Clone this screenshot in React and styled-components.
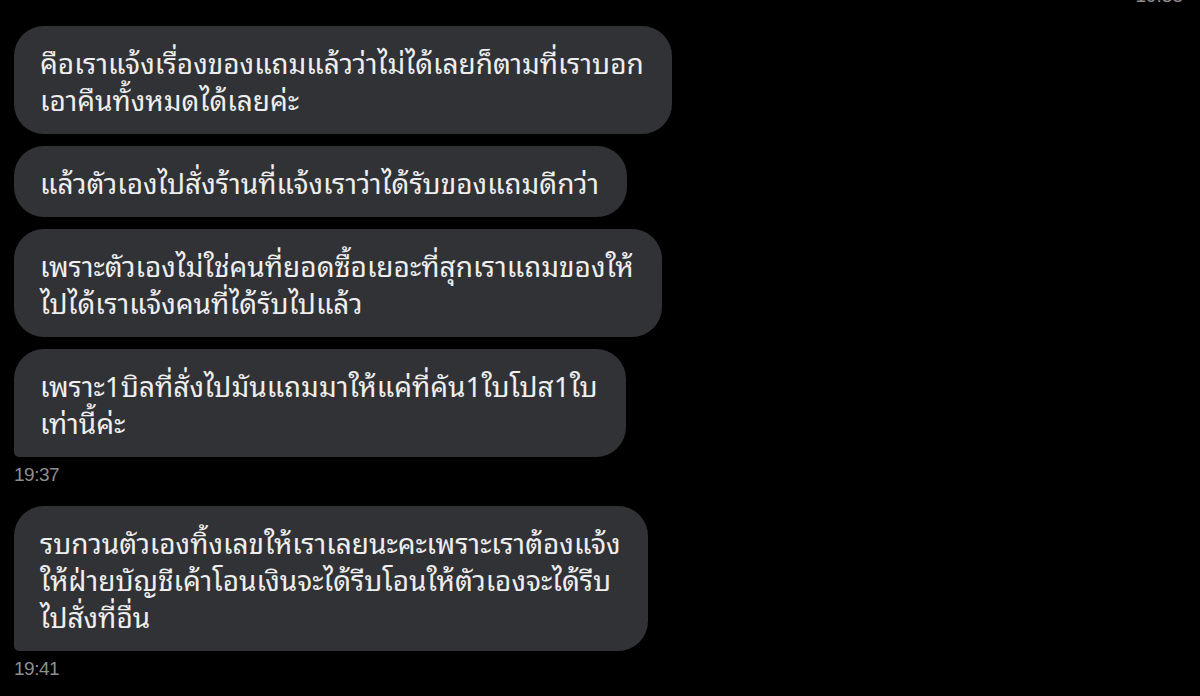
import styled, { createGlobalStyle } from 'styled-components';

const GlobalStyle = createGlobalStyle`
  html, body {
    margin: 0;
    padding: 0;
    background: #000;
  }
  body {
    font-family: "Noto Sans Thai Looped", "Noto Sans Thai", "Noto Sans", sans-serif;
  }
`;

const groups = [
  {
    time: '19:37',
    messages: [
      ['คือเราแจ้งเรื่องของแถมแล้วว่าไม่ได้เลยก็ตามที่เราบอก', 'เอาคืนทั้งหมดได้เลยค่ะ'],
      ['แล้วตัวเองไปสั่งร้านที่แจ้งเราว่าได้รับของแถมดีกว่า'],
      ['เพราะตัวเองไม่ใช่คนที่ยอดซื้อเยอะที่สุกเราแถมของให้', 'ไปได้เราแจ้งคนที่ได้รับไปแล้ว'],
      ['เพราะ1บิลที่สั่งไปมันแถมมาให้แค่ที่คัน1ใบโปส1ใบ', 'เท่านี้ค่ะ'],
    ],
  },
  {
    time: '19:41',
    messages: [
      [
        'รบกวนตัวเองทิ้งเลขให้เราเลยนะคะเพราะเราต้องแจ้ง',
        'ให้ฝ่ายบัญชีเค้าโอนเงินจะได้รีบโอนให้ตัวเองจะได้รีบ',
        'ไปสั่งที่อื่น',
      ],
    ],
  },
];

const App = () => {
  return (
    <>
      <GlobalStyle />
      <Screen>
        <TopStamp>19:35</TopStamp>
        {groups.map((group) => (
          <Group key={group.time}>
            {group.messages.map((lines, index) => (
              <Bubble key={index} $last={index === group.messages.length - 1}>
                {lines.map((line) => (
                  <Line key={line}>{line}</Line>
                ))}
              </Bubble>
            ))}
            <Time>{group.time}</Time>
          </Group>
        ))}
      </Screen>
    </>
  );
};

const Screen = styled.main`
  width: 1200px;
  height: 696px;
  overflow: hidden;
  background: #000;
  padding: 0 14px;
  box-sizing: border-box;
  display: flex;
  flex-direction: column;
`;

const TopStamp = styled.div`
  align-self: flex-end;
  margin: -13px 3px 0 0;
  height: 17px;
  font-family: "Liberation Sans", Arial, sans-serif;
  font-size: 19px;
  line-height: 17px;
  color: #8e8e90;
`;

const Group = styled.section`
  display: flex;
  flex-direction: column;
  align-items: flex-start;
  gap: 12px;
  margin-top: 22px;
  & + & {
    margin-top: 20px;
  }
`;

const Bubble = styled.div`
  background: #313235;
  color: #eeeeee;
  border-radius: 30px 30px 30px ${({ $last }) => ($last ? '5px' : '30px')};
  padding: 17px 28px 17px 26px;
  font-size: 28px;
  line-height: 37px;
`;

const Line = styled.div`
  white-space: nowrap;
`;

const Time = styled.div`
  margin-top: -5px;
  font-family: "Liberation Sans", Arial, sans-serif;
  font-size: 19px;
  line-height: 22px;
  color: #8e8e90;
  letter-spacing: -0.5px;
`;

export default App;
